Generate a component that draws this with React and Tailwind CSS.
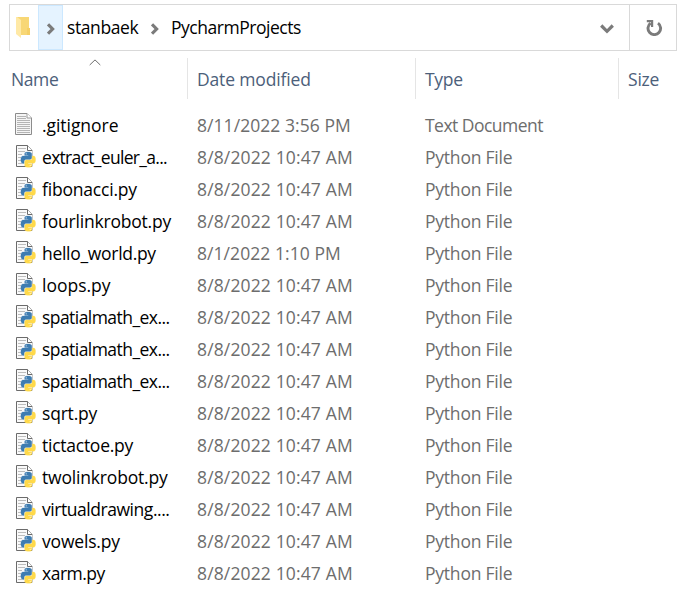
const PY_HALF =
  "M14.25.18l.9.2.73.26.59.3.45.32.34.34.25.34.16.33.1.3.04.26.02.2-.01.13V8.5l-.05.63-.13.55-.21.46-.26.38-.3.31-.33.25-.35.19-.35.14-.33.1-.3.07-.26.04-.21.02H8.77l-.69.05-.59.14-.5.22-.41.27-.33.32-.27.35-.2.36-.15.37-.1.35-.07.32-.04.27-.02.21v3.06H3.17l-.21-.03-.28-.07-.32-.12-.35-.18-.36-.26-.36-.36-.35-.46-.32-.59-.28-.73-.21-.88-.14-1.05-.05-1.23.06-1.22.16-1.04.24-.87.32-.71.36-.57.4-.44.42-.33.42-.24.4-.16.36-.1.32-.05.24-.01h.16l.06.01h8.16v-.83H6.18l-.01-2.75-.02-.37.05-.34.11-.31.17-.28.25-.26.31-.23.38-.2.44-.18.51-.15.58-.12.64-.1.71-.06.77-.04.84-.02 1.27.05zm-6.3 1.98l-.23.33-.08.41.08.41.23.34.33.22.41.09.41-.09.33-.22.23-.34.08-.41-.08-.41-.23-.33-.33-.22-.41-.09-.41.09z";

const PY = "Python File";
const AT = "8/8/2022 10:47 AM";

const files = [
  { name: ".gitignore", cls: "tracking-[-0.05px]", date: "8/11/2022 3:56 PM", type: "Text Document" },
  { name: "extract_euler_a...", cls: "tracking-[-0.7px]", date: AT, type: PY },
  { name: "fibonacci.py", cls: "tracking-[-0.2px]", date: AT, type: PY },
  { name: "fourlinkrobot.py", cls: "tracking-[-0.2px]", date: AT, type: PY },
  { name: "hello_world.py", cls: "tracking-[-0.3px]", date: "8/1/2022 1:10 PM", type: PY },
  { name: "loops.py", cls: "tracking-normal", date: AT, type: PY },
  { name: "spatialmath_ex...", cls: "tracking-[-0.55px]", date: AT, type: PY },
  { name: "spatialmath_ex...", cls: "tracking-[-0.55px]", date: AT, type: PY },
  { name: "spatialmath_ex...", cls: "tracking-[-0.55px]", date: AT, type: PY },
  { name: "sqrt.py", cls: "tracking-[-0.2px]", date: AT, type: PY },
  { name: "tictactoe.py", cls: "tracking-[-0.25px]", date: AT, type: PY },
  { name: "twolinkrobot.py", cls: "tracking-[-0.18px]", date: AT, type: PY },
  { name: "virtualdrawing....", cls: "tracking-[-0.45px]", date: AT, type: PY },
  { name: "vowels.py", cls: "tracking-[-0.18px]", date: AT, type: PY },
  { name: "xarm.py", cls: "tracking-[-0.5px]", date: AT, type: PY },
];

function TextIcon() {
  return (
    <svg className="block" width="24" height="32" viewBox="0 0 24 32">
      <path d="M2.5 3.5H14L18.5 8V24.5H2.5Z" fill="#f5f5f5" stroke="#8c8c8c" />
      <path d="M14 3.5V8H18.5" fill="#fff" stroke="#9a9a9a" />
      <path
        d="M4 6.5H13M4 8.5H13M4 10.5H17M4 12.5H17M4 14.5H17M4 16.5H17M4 18.5H17M4 20.5H17M4 22.5H17"
        stroke="#b4b4b4"
      />
    </svg>
  );
}

function PythonIcon() {
  return (
    <svg className="block" width="24" height="32" viewBox="0 0 24 32">
      <path d="M3.5 3.5H14L19.5 8.5V24.5H3.5Z" fill="#fafafa" />
      <path d="M19.5 8.5V24.5" stroke="#c9c9c9" />
      <path d="M19 8.5L14.5 3.5H3.5V24.5H19" fill="none" stroke="#6b6b6b" />
      <path d="M14.5 3.5V8.5H19" fill="#fff" stroke="#6b6b6b" />
      <path d="M5 6.5H13M5 9.5H12M5 12.5H9M5 15.5H8M5 18.5H8M5 21.5H9" stroke="#bdbdbd" />
      <g transform="translate(7.9 10) scale(0.61 0.64)">
        <path d={PY_HALF} fill="#3e7cb1" stroke="#3e7cb1" strokeWidth="0.4" />
        <path d={PY_HALF} fill="#ffd94a" stroke="#ffd94a" strokeWidth="0.4" transform="rotate(180 12 12)" />
      </g>
    </svg>
  );
}

function Chevron() {
  return (
    <svg className="block" width="9" height="12" viewBox="0 0 9 12">
      <path d="M1 1.3L5.6 6L1 10.7" fill="none" stroke="#7b7b7b" strokeWidth="3.2" />
    </svg>
  );
}

function AddressBar() {
  return (
    <div className="ml-[9px] mt-1 flex h-[47px] w-[668px] border border-[#d9d9d9] text-black">
      <div className="flex w-7 pl-[6px] pt-3">
        <svg className="block" width="16" height="24" viewBox="0 0 16 24">
          <path d="M1 0H13V11H14V18H4Z" fill="#f8d775" />
          <path d="M11 11H14V18H11Z" fill="#f5cf66" />
          <path d="M0 0H1L5 3V21L0 17Z" fill="#ffe9a6" />
        </svg>
      </div>
      <div className="flex w-[25px] items-center border border-[#cce8ff] bg-[#e5f3ff] pl-2 pt-[3px]">
        <Chevron />
      </div>
      <div className="flex items-center pl-1">
        <span className="w-[84px] whitespace-nowrap pb-px tracking-[-0.4px]">stanbaek</span>
        <span className="w-5 pt-[3px]"><Chevron /></span>
        <span className="whitespace-nowrap pb-px tracking-[-0.47px]">PycharmProjects</span>
      </div>
      <div className="ml-auto flex w-[43px] items-center pl-[14px] pt-[3px]">
        <svg className="block" width="14" height="10" viewBox="0 0 14 10">
          <path d="M1.2 1.5L7 7.3L12.8 1.5" fill="none" stroke="#7b7b7b" strokeWidth="3.2" />
        </svg>
      </div>
      <div className="flex w-[47px] items-center border-l border-[#d9d9d9] pl-4">
        <svg className="block" width="17" height="17" viewBox="0 0 17 17">
          <path d="M4.6 4.2A6.3 6.3 0 1 0 12 4.2" fill="none" stroke="#7b7b7b" strokeWidth="2.9" />
          <path d="M0.8 2.1H6.1V8" fill="none" stroke="#7b7b7b" strokeWidth="2.2" />
        </svg>
      </div>
    </div>
  );
}

function Header() {
  return (
    <div className="mt-[7px] flex h-[41px] text-[#4c607a]">
      <div className="relative flex w-[188px] items-center border-r border-[#e5e5e5] pl-[11px] pt-px tracking-[-0.4px]">
        <svg className="absolute left-[89px] top-[1px]" width="12" height="7" viewBox="0 0 12 7">
          <path d="M0.7 6L6 0.9L11.3 6" fill="none" stroke="#6d6d6d" />
        </svg>
        Name
      </div>
      <div className="flex w-[228px] items-center border-r border-[#e5e5e5] pl-[9px] pt-px tracking-[-0.15px]">Date modified</div>
      <div className="flex w-[203px] items-center border-r border-[#e5e5e5] pl-[9px] pt-px tracking-[-0.3px]">Type</div>
      <div className="flex items-center pl-[9px] pt-px tracking-[-0.2px]">Size</div>
    </div>
  );
}

export default function App() {
  return (
    <div className="flex h-[602px] w-[679px] flex-col overflow-hidden bg-white font-['Open_Sans','Noto_Sans',sans-serif] text-[17.5px] leading-8">
      <AddressBar />
      <Header />
      <div className="mt-[11px] flex flex-col">
        {files.map((f, i) => (
          <div key={i} className="flex h-8 whitespace-nowrap leading-[30px] text-[#6d6d6d]">
            <div className="flex w-[197px] pl-[13px] text-black">
              <span className="w-[29px]">{i === 0 ? <TextIcon /> : <PythonIcon />}</span>
              <span className={f.cls}>{f.name}</span>
            </div>
            <span className={i === 0 || i === 4 ? "w-[228px] tracking-[0.06px]" : "w-[228px] tracking-[0.14px]"}>{f.date}</span>
            <span className={f.type === PY ? "tracking-[-0.22px]" : "tracking-[-0.53px]"}>{f.type}</span>
          </div>
        ))}
      </div>
    </div>
  );
}
